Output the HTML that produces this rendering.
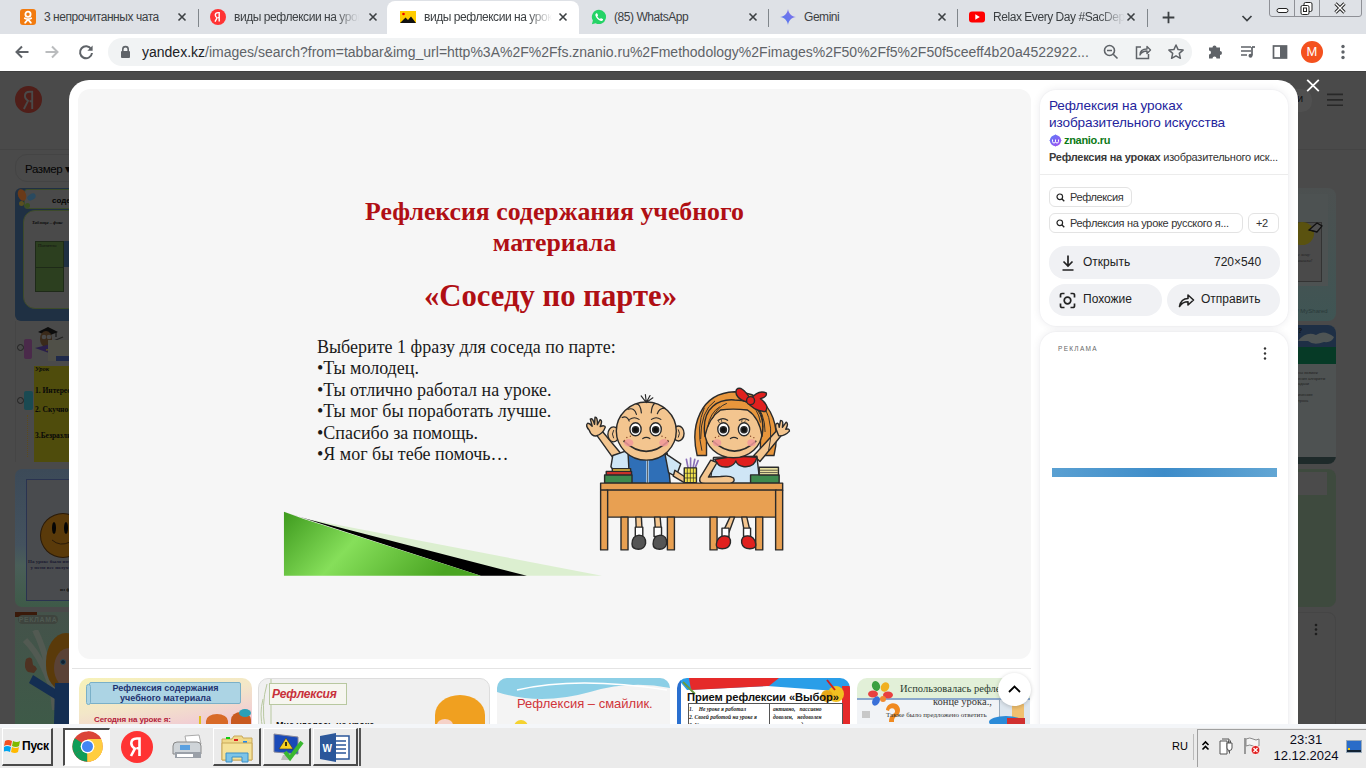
<!DOCTYPE html>
<html><head><meta charset="utf-8">
<style>
*{box-sizing:border-box;margin:0;padding:0}
html,body{width:1366px;height:768px;overflow:hidden;background:#fff;font-family:"Liberation Sans",sans-serif;position:relative}
.abs{position:absolute}
#tabs{left:0;top:0;width:1366px;height:34px;background:#dee1e6}
.tab{position:absolute;top:0;height:34px;font-size:12px;color:#3c4043}
.tab .t{position:absolute;top:10px;white-space:nowrap;overflow:hidden;letter-spacing:-0.45px}
.tab .x{position:absolute;top:9px;width:16px;height:16px}
.sep{position:absolute;top:9px;width:1px;height:18px;background:#80868b}
#toolbar{left:0;top:34px;width:1366px;height:36px;background:#fff}
#page{left:0;top:70px;width:1366px;height:654px;background:#4d4d4d;overflow:hidden}
#strip{left:0;top:724px;width:1366px;height:4px;background:#f4f6f9}
#taskbar{left:0;top:728px;width:1366px;height:40px;background:#ebebeb}
.tab.active{background:#fff;border-radius:8px 8px 0 0;top:1px;height:33px}
.tab.active .t{top:9px}.tab.active .x{top:8px}.tab.active svg.abs{top:8px!important}
.fade{-webkit-mask-image:linear-gradient(to right,#000 80%,transparent)}
.card{background:#fff;border-radius:16px;box-shadow:0 0 9px rgba(10,20,60,.09),0 0 2px rgba(10,20,60,.05)}
.chip{height:20px;border:1px solid #e3e3e3;border-radius:6px;font-size:11px;color:#333;letter-spacing:-0.4px}
.chip span{white-space:nowrap}
.btn{background:#f0f1f4;border-radius:16px;font-size:12px;color:#222}
.btn span{white-space:nowrap}
.th{height:60px;border-radius:10px;overflow:hidden}
.tb{position:absolute;top:728px;height:38px;border-top:1px solid #fff;border-left:1px solid #fff;border-right:2px solid #4a4a4a;border-bottom:2px solid #4a4a4a;background:#ebebeb}
.tb.pressed{border-top:2px solid #4a4a4a;border-left:2px solid #4a4a4a;border-right:1px solid #fff;border-bottom:1px solid #fff;background:#fff}
</style></head><body>
<div id="tabs" class="abs">
 <div class="tab" style="left:0;width:198px">
  <svg class="abs" style="left:20px;top:9px" width="16" height="16" viewBox="0 0 16 16"><rect width="16" height="16" rx="3" fill="#f27b0f"/><circle cx="8" cy="5.3" r="2.6" fill="none" stroke="#fff" stroke-width="1.8"/><path d="M4.8 9.2q3.2 2 6.4 0M8 10.5l-2.8 3.2M8 10.5l2.8 3.2" fill="none" stroke="#fff" stroke-width="1.8" stroke-linecap="round"/></svg>
  <div class="t" style="left:44px;width:130px">3 непрочитанных чата</div>
  <svg class="x" style="left:174px" viewBox="0 0 16 16"><path d="M4.5 4.5l7 7M11.5 4.5l-7 7" stroke="#3c4043" stroke-width="1.6"/></svg>
 </div>
 <div class="sep" style="left:198px"></div>
 <div class="tab" style="left:198px;width:190px">
  <svg class="abs" style="left:210px;top:9px;left:12px" width="16" height="16" viewBox="0 0 16 16"><circle cx="8" cy="8" r="8" fill="#f33"/><path d="M9.2 12.6V3.6H8.1C6.3 3.6 5.3 4.6 5.3 6.1c0 1.3.6 2 1.8 2.7L5 12.6M9.2 8.6H8" fill="none" stroke="#fff" stroke-width="1.4"/></svg>
  <div class="t fade" style="left:36px;width:125px">виды рефлексии на уроке</div>
  <svg class="x" style="left:167px" viewBox="0 0 16 16"><path d="M4.5 4.5l7 7M11.5 4.5l-7 7" stroke="#3c4043" stroke-width="1.6"/></svg>
 </div>
 <div class="tab active" style="left:387px;width:192px">
  <svg class="abs" style="left:13px;top:9px" width="16" height="16" viewBox="0 0 16 16"><rect x="0" y="2" width="16" height="12" fill="#ffcc00"/><circle cx="3.5" cy="5" r="1.3" fill="#e00"/><path d="M0 14L5.5 8.5 8 11l3-3.5L16 14z" fill="#111"/></svg>
  <div class="t fade" style="left:37px;width:128px">виды рефлексии на уроке</div>
  <svg class="x" style="left:168px" viewBox="0 0 16 16"><path d="M4.5 4.5l7 7M11.5 4.5l-7 7" stroke="#3c4043" stroke-width="1.6"/></svg>
 </div>
 <div class="tab" style="left:579px;width:190px">
  <svg class="abs" style="left:12px;top:9px" width="16" height="16" viewBox="0 0 16 16"><path d="M8 .8A7.1 7.1 0 0 0 1.9 11.6L.9 15.2l3.7-1A7.1 7.1 0 1 0 8 .8z" fill="#25d366"/><path d="M5.3 4.3c.3-.2.7-.2.9.1l.8 1.7c.1.3 0 .5-.2.7l-.5.6c.6 1.2 1.5 2 2.6 2.6l.6-.6c.2-.2.5-.2.7-.1l1.6.8c.3.2.3.5.2.8-.4.9-1.2 1.3-2 1.1C7.6 11.4 5 8.9 4.4 6.5c-.2-.9.2-1.7.9-2.2z" fill="#fff"/></svg>
  <div class="t" style="left:35px;width:130px">(85) WhatsApp</div>
  <svg class="x" style="left:166px" viewBox="0 0 16 16"><path d="M4.5 4.5l7 7M11.5 4.5l-7 7" stroke="#3c4043" stroke-width="1.6"/></svg>
 </div>
 <div class="sep" style="left:768px"></div>
 <div class="tab" style="left:769px;width:188px">
  <svg class="abs" style="left:11px;top:9px" width="16" height="16" viewBox="0 0 16 16"><defs><linearGradient id="gm" x1="0" y1="1" x2="1" y2="0"><stop offset="0" stop-color="#4a7cf0"/><stop offset="1" stop-color="#8a6ee8"/></linearGradient></defs><path d="M8 0C8.4 4.3 11.7 7.6 16 8 11.7 8.4 8.4 11.7 8 16 7.6 11.7 4.3 8.4 0 8 4.3 7.6 7.6 4.3 8 0z" fill="url(#gm)"/></svg>
  <div class="t" style="left:35px;width:130px">Gemini</div>
  <svg class="x" style="left:165px" viewBox="0 0 16 16"><path d="M4.5 4.5l7 7M11.5 4.5l-7 7" stroke="#3c4043" stroke-width="1.6"/></svg>
 </div>
 <div class="sep" style="left:957px"></div>
 <div class="tab" style="left:958px;width:189px">
  <svg class="abs" style="left:11px;top:9px" width="16" height="16" viewBox="0 0 16 16"><rect x="0" y="2.5" width="16" height="11" rx="3" fill="#f00"/><path d="M6.3 5.3v5.4L10.8 8z" fill="#fff"/></svg>
  <div class="t fade" style="left:35px;width:132px">Relax Every Day #SacDep</div>
  <svg class="x" style="left:165px" viewBox="0 0 16 16"><path d="M4.5 4.5l7 7M11.5 4.5l-7 7" stroke="#3c4043" stroke-width="1.6"/></svg>
 </div>
 <div class="sep" style="left:1147px"></div>
 <svg class="abs" style="left:1160px;top:9px" width="17" height="17" viewBox="0 0 16 16"><path d="M8 2.5v11M2.5 8h11" stroke="#3c4043" stroke-width="1.7"/></svg>
 <svg class="abs" style="left:1239px;top:10px" width="16" height="16" viewBox="0 0 16 16"><path d="M3.5 6l4.5 4.5L12.5 6" fill="none" stroke="#3c4043" stroke-width="1.7"/></svg>
 <div class="abs" style="left:1269px;top:-3px;width:93px;height:20px;border:1px solid #8e9096;border-radius:3px;background:#dee1e6"></div>
 <div class="abs" style="left:1294px;top:0;width:1px;height:16px;background:#8e9096"></div>
 <div class="abs" style="left:1319px;top:0;width:1px;height:16px;background:#8e9096"></div>
 <svg class="abs" style="left:1276px;top:3px" width="14" height="12" viewBox="0 0 14 12"><rect x="1" y="5.5" width="11" height="4" rx="2" fill="#fff" stroke="#222" stroke-width="1"/></svg>
 <svg class="abs" style="left:1299px;top:1px" width="16" height="15" viewBox="0 0 16 15"><rect x="5" y="1.5" width="8" height="9" rx="1.5" fill="#fff" stroke="#222"/><rect x="2" y="4.5" width="8" height="9" rx="1.5" fill="#fff" stroke="#222"/><rect x="4.5" y="7" width="3" height="3.5" fill="none" stroke="#222"/></svg>
 <svg class="abs" style="left:1333px;top:2px" width="14" height="13" viewBox="0 0 14 13"><path d="M2.5 1.5l9 9M11.5 1.5l-9 9" stroke="#222" stroke-width="3.2"/><path d="M2.5 1.5l9 9M11.5 1.5l-9 9" stroke="#fff" stroke-width="1.4"/></svg>
</div>
<div id="toolbar" class="abs">
 <svg class="abs" style="left:12px;top:8px" width="20" height="20" viewBox="0 0 20 20"><path d="M16.5 10H4.5M10 4.5L4.5 10 10 15.5" fill="none" stroke="#5f6368" stroke-width="2"/></svg>
 <svg class="abs" style="left:42px;top:8px" width="20" height="20" viewBox="0 0 20 20"><path d="M3.5 10h12M10 4.5l5.5 5.5L10 15.5" fill="none" stroke="#babcbe" stroke-width="2"/></svg>
 <svg class="abs" style="left:76px;top:8px" width="20" height="20" viewBox="0 0 20 20"><path d="M15.2 7.2A6 6 0 1 0 16 11" fill="none" stroke="#5f6368" stroke-width="2"/><path d="M16.6 3.6v5.2h-5.2z" fill="#5f6368"/></svg>
 <div class="abs" style="left:108px;top:4px;width:1084px;height:28px;border-radius:14px;background:#f1f3f4"></div>
 <svg class="abs" style="left:119px;top:11px" width="13" height="14" viewBox="0 0 13 14"><path d="M3.8 6V4.3a2.7 2.7 0 0 1 5.4 0V6" fill="none" stroke="#5f6368" stroke-width="1.6"/><rect x="2" y="6" width="9" height="7" rx="1" fill="#5f6368"/></svg>
 <div class="abs" style="left:142px;top:10px;font-size:14px;color:#5f6368;white-space:nowrap"><span style="color:#202124">yandex.kz</span>/images/search?from=tabbar&amp;img_url=http%3A%2F%2Ffs.znanio.ru%2Fmethodology%2Fimages%2F50%2Ff5%2F50f5ceeff4b20a4522922...</div>
 <svg class="abs" style="left:1102px;top:9px" width="18" height="18" viewBox="0 0 18 18"><circle cx="7.5" cy="7.5" r="5" fill="none" stroke="#5f6368" stroke-width="1.6"/><path d="M11.2 11.2L15.5 15.5M5 7.5h5" stroke="#5f6368" stroke-width="1.6"/></svg>
 <svg class="abs" style="left:1134px;top:9px" width="18" height="18" viewBox="0 0 18 18"><path d="M7 4H2.5v11.5h12V11" fill="none" stroke="#5f6368" stroke-width="1.5"/><path d="M6 12c0-4 3-6 7-6V3.5l3.5 3.5L13 10.5V8c-3 0-5.5 1-7 4z" fill="none" stroke="#5f6368" stroke-width="1.4" stroke-linejoin="round"/></svg>
 <svg class="abs" style="left:1167px;top:9px" width="18" height="18" viewBox="0 0 18 18"><path d="M9 2l2.1 4.6 5 .5-3.8 3.3 1.1 4.9L9 12.8l-4.4 2.5 1.1-4.9L1.9 7.1l5-.5z" fill="none" stroke="#5f6368" stroke-width="1.5" stroke-linejoin="round"/></svg>
 <svg class="abs" style="left:1207px;top:9px" width="18" height="18" viewBox="0 0 18 18"><path d="M2 6h3.5a2 2 0 1 1 4 0H13v3.5a2 2 0 1 1 0 4V17H9.5a2 2 0 1 0-4 0H2v-4a2 2 0 1 0 0-4z" fill="#5f6368" transform="translate(0,-1.5)"/></svg>
 <svg class="abs" style="left:1239px;top:9px" width="18" height="18" viewBox="0 0 18 18"><path d="M2 4h10M2 8h10M2 12h6" stroke="#5f6368" stroke-width="1.7"/><path d="M13 4v8.5" stroke="#5f6368" stroke-width="1.7"/><circle cx="11.5" cy="12.8" r="2" fill="#5f6368"/><path d="M13 4h3" stroke="#5f6368" stroke-width="1.7"/></svg>
 <svg class="abs" style="left:1271px;top:9px" width="18" height="18" viewBox="0 0 18 18"><rect x="2.5" y="3" width="13" height="12" fill="none" stroke="#5f6368" stroke-width="1.7"/><rect x="9" y="3" width="6.5" height="12" fill="#5f6368"/></svg>
 <div class="abs" style="left:1301px;top:7px;width:22px;height:22px;border-radius:50%;background:#f4511e;color:#fff;font-size:13px;text-align:center;line-height:22px">M</div>
 <svg class="abs" style="left:1335px;top:9px" width="16" height="18" viewBox="0 0 16 18"><circle cx="8" cy="3.5" r="1.7" fill="#5f6368"/><circle cx="8" cy="9" r="1.7" fill="#5f6368"/><circle cx="8" cy="14.5" r="1.7" fill="#5f6368"/></svg>
</div>
<div id="page" class="abs">
 <!-- background yandex page -->
<div id="bg" class="abs" style="left:0;top:0;width:1366px;height:654px;background:#4a4a4a">
  <div class="abs" style="left:15px;top:16px;width:27px;height:27px;border-radius:50%;background:#501e19"></div>
  <svg class="abs" style="left:15px;top:16px" width="27" height="27" viewBox="0 0 27 27"><path d="M17.2 23V5.8h-2.4c-3.2 0-4.9 1.7-4.9 4.3 0 2.2 1 3.4 3.1 4.7L8.9 23M17.2 15.3h-2.6" fill="none" stroke="#4a4a4a" stroke-width="1.9"/></svg>
  <div class="abs" style="left:0;top:79px;width:1366px;height:1px;background:#444"></div>
  <div class="abs" style="left:15px;top:84px;width:90px;height:28px;border:1px solid #444;border-radius:12px"></div>
  <div class="abs" style="left:25px;top:92px;font-size:11.5px;letter-spacing:-0.4px;color:#050505">Размер ▾</div>
  <div class="abs" style="left:1200px;top:19px;width:112px;height:23px;border-radius:10px;background:#505050"></div>
  <div class="abs" style="left:1297px;top:22px;font-size:11px;color:#111">и</div>
  <svg class="abs" style="left:1327px;top:22px" width="16" height="14"><path d="M0 2.4h16M0 7.9h16M0 13.2h16" stroke="#282828" stroke-width="1.6"/></svg>
  <!-- left thumb 1 -->
  <div class="abs" style="left:15px;top:118px;width:180px;height:133px;border-radius:6px;background:#1f3043"></div>
  <div class="abs" style="left:24px;top:119px;width:170px;height:20px;background:#4a4a4a;border:1px solid #3c4a2a;border-radius:3px"></div>
  <div class="abs" style="left:18px;top:119px;width:8px;height:12px;border-radius:50%;background:#6a3a18;transform:rotate(-20deg)"></div>
  <div class="abs" style="left:27px;top:124px;width:9px;height:6px;border-radius:50%;background:#2a4a60;transform:rotate(-30deg)"></div>
  <div class="abs" style="left:19px;top:131px;width:5px;height:5px;border-radius:50%;background:#5a5020"></div>
  <div class="abs" style="left:25px;top:133px;width:5px;height:5px;border-radius:50%;background:#3a5020"></div>
  <div class="abs" style="left:52px;top:126px;font-size:8px;font-weight:bold;color:#060606">соде</div>
  <div class="abs" style="left:23px;top:140px;width:170px;height:99px;background:#4a4a4a;border:1px solid #3c4a2a;border-radius:12px"></div>
  <div class="abs" style="left:32px;top:150px;font-size:4.5px;font-style:italic;font-weight:bold;color:#080808;font-family:'Liberation Serif'">Таблица – фикс</div>
  <div class="abs" style="left:35px;top:171px;width:29px;height:51px;background:#2c3f1f;border:1px solid #1e2a18"></div>
  <div class="abs" style="left:35px;top:197px;width:29px;height:1px;background:#1e2a18"></div>
  <div class="abs" style="left:64px;top:171px;width:6px;height:26px;background:#1f3043"></div>
  <div class="abs" style="left:38px;top:173px;font-size:5px;color:#111;font-family:'Liberation Serif'">Понятно</div>
  <!-- left thumb 2 -->
  <div class="abs" style="left:15px;top:251px;width:180px;height:141px;background:#4a4a4a;border-left:1px solid #454545"></div>
  <svg class="abs" style="left:34px;top:254px" width="30" height="30" viewBox="0 0 30 30"><path d="M4 8l10-5 10 5-10 4z" fill="#0c0c0c"/><path d="M22 8v5" stroke="#0c0c0c"/><ellipse cx="12" cy="15" rx="6" ry="8" fill="#3a2a1a"/><circle cx="10" cy="13" r="2.3" fill="#4a4a4a"/><circle cx="15" cy="13" r="2.3" fill="#4a4a4a"/><path d="M17 18l12-5" stroke="#222" stroke-width="1.2"/><path d="M1 24l16-4 12 4-14 5z" fill="#2a1f4a"/><path d="M12 26l15-2" stroke="#5a5020" stroke-width="1.4"/></svg>
  <div class="abs" style="left:24px;top:269px;width:8px;height:20px;border-radius:2px;background:#4a2a4a"></div>
  <div class="abs" style="left:17px;top:274px;width:7px;height:7px;border-radius:50%;border:1px solid #222"></div>
  <div class="abs" style="left:48px;top:270px;width:30px;height:21px;background:#505048"></div>
  <div class="abs" style="left:56px;top:286px;width:20px;height:5px;background:#1f2a4a"></div>
  <div class="abs" style="left:34px;top:296px;width:160px;height:96px;background:#4f4c0c"></div>
  <div class="abs" style="left:24px;top:321px;width:9px;height:19px;border-radius:2px;background:#1a4a52"></div>
  <div class="abs" style="left:17px;top:327px;width:7px;height:7px;border-radius:50%;border:1px solid #222"></div>
  <div class="abs" style="left:27px;top:345px;width:1px;height:42px;border-left:1px dotted #5a4a20"></div>
  <div class="abs" style="left:35px;top:295px;font-size:6.5px;font-style:italic;font-weight:bold;font-family:'Liberation Serif';color:#0a0a0a">Урок</div>
  <div class="abs" style="left:35px;top:311px;font-size:7.5px;font-weight:bold;font-family:'Liberation Serif';line-height:19px;color:#080808">1. Интерес<br>2. Скучно</div>
  <div class="abs" style="left:35px;top:361px;font-size:7.5px;font-weight:bold;font-family:'Liberation Serif';color:#080808">3.Безразли</div>
  <!-- left thumb 3 -->
  <div class="abs" style="left:15px;top:399px;width:180px;height:138px;border-radius:7px;background:linear-gradient(#3c4a58 0%,#44525e 55%,#4a5e58 70%,#3e5a48 100%)"></div>
  <div class="abs" style="left:26px;top:409px;width:168px;height:122px;background:#494b4e;border:1px solid #2a3350"></div>
  <div class="abs" style="left:40px;top:443px;width:46px;height:45px;border-radius:50%;background:#5a3a0a;border:1px solid #2a1a08"></div>
  <div class="abs" style="left:52px;top:452px;width:4px;height:12px;border-radius:50%;background:#050505"></div>
  <div class="abs" style="left:64px;top:452px;width:4px;height:12px;border-radius:50%;background:#050505"></div>
  <svg class="abs" style="left:50px;top:468px" width="20" height="10"><path d="M2 2q8 7 18 2" fill="none" stroke="#2a1a08" stroke-width="1"/></svg>
  <div class="abs" style="left:28px;top:489px;font-size:5px;font-weight:bold;font-family:'Liberation Serif';color:#1a1a30;white-space:nowrap;line-height:6px">На уроке было инте<br>&nbsp;&nbsp;у меня все получ</div>
  <div class="abs" style="left:60px;top:517px;font-size:5px;font-weight:bold;font-family:'Liberation Serif';color:#111">из ф</div>
  <!-- left thumb 4 -->
  <div class="abs" style="left:15px;top:542px;width:180px;height:112px;background:linear-gradient(#44524a,#3e5a48)"></div>
  <svg class="abs" style="left:15px;top:560px" width="55" height="94" viewBox="0 0 55 94"><path d="M10 10q20 20 30 60M20 0q15 30 20 80" stroke="#525a52" stroke-width="6" fill="none"/></svg>
  <div class="abs" style="left:15px;top:542px;width:22px;height:5px;background:#3a1a0a"></div>
  <div class="abs" style="left:18px;top:545px;width:40px;height:9px;border-radius:5px;background:#3e443e;color:#4e5a52;font-size:7px;line-height:9px;text-align:center;letter-spacing:.6px;font-weight:bold">РЕКЛАМА</div>
  <div class="abs" style="left:46px;top:563px;width:40px;height:58px;border-radius:50% 50% 45% 45%;background:#5a3a0a"></div>
  <div class="abs" style="left:54px;top:578px;width:30px;height:40px;border-radius:50%;background:#5a4236"></div>
  <div class="abs" style="left:60px;top:589px;width:6px;height:6px;border-radius:50%;background:#102030;border:1px solid #2a4a5a"></div>
  <svg class="abs" style="left:20px;top:585px" width="50" height="69" viewBox="0 0 50 69"><path d="M6 4q4-3 6 0l1 6q3 1 4 4l-3 4-6-1q-5-4-2-13z" fill="#4e3222"/><path d="M13 20l22 14 0 10-26-16z" fill="#142e52"/><path d="M35 28h15v41H34z" fill="#142e52"/></svg>
  <!-- right column -->
  <div class="abs" style="left:1238px;top:118px;width:98px;height:133px;border-radius:8px;background:linear-gradient(#4c5050,#3f5554)"></div>
  <div class="abs" style="left:1250px;top:124px;width:78px;height:92px;background:#4d5252"></div>
  <div class="abs" style="left:1250px;top:152px;width:72px;height:60px;background:#4a4a4a;border:1px solid #333"></div>
  <div class="abs" style="left:1290px;top:152px;width:24px;height:23px;border-radius:50%;background:#5a520f"></div>
  <svg class="abs" style="left:1306px;top:151px" width="18" height="14"><path d="M3 9l8-7 5 3-5 6z" fill="#505050" stroke="#111" stroke-width="1.3"/><path d="M3 9l8 2" stroke="#111"/></svg>
  <div class="abs" style="left:1295px;top:182px;font-size:5px;font-style:italic;color:#222;font-family:'Liberation Serif';line-height:6px">ас хочу<br>лишили!</div>
  <div class="abs" style="left:1297px;top:238px;font-size:6px;color:#2a3a3a">/ MyShared</div>
  <div class="abs" style="left:1238px;top:255px;width:98px;height:139px;border-radius:8px;background:#4e5252;overflow:hidden"><div style="height:22px;background:#1e2f45"></div><div style="height:17px;background:#063a26"></div><div style="height:93px;background:#4e5252"></div><div style="height:7px;background:#1e2a2a"></div></div>
  <svg class="abs" style="left:1298px;top:259px" width="38" height="20"><path d="M0 12q8-10 18-6q8-6 18 2q-2 6-10 5q-10 4-16-1z" fill="#4e5454"/></svg>
  <div class="abs" style="left:1298px;top:257px;font-size:7px;font-weight:bold;color:#111">?</div>
  <div class="abs" style="left:1298px;top:300px;font-size:4px;color:#222;line-height:5.5px;white-space:nowrap">ны возмож<br>ения алгоритм<br>адачи<br><br>ические<br>трока</div>
  <div class="abs" style="left:1238px;top:399px;width:98px;height:138px;border-radius:8px;background:#3e4a3e"></div>
  <div class="abs" style="left:1240px;top:402px;width:87px;height:23px;background:#4b4b4b"></div>
  <div class="abs" style="left:1238px;top:542px;width:98px;height:140px;border-radius:8px;border:1px solid #454545;background:#4a4a4a"></div>
  <svg class="abs" style="left:1313px;top:553px" width="6" height="13"><circle cx="3" cy="2" r="1.3" fill="#1e1e1e"/><circle cx="3" cy="6.5" r="1.3" fill="#1e1e1e"/><circle cx="3" cy="11" r="1.3" fill="#1e1e1e"/></svg>
 </div>
 <!-- modal close -->
 <svg class="abs" style="left:1306px;top:9px" width="14" height="13" viewBox="0 0 14 13"><path d="M1.2 0.8l11.6 11.4M12.8 0.8L1.2 12.2" stroke="#fff" stroke-width="1.8"/></svg>
 <!-- modal -->
 <div id="modal" class="abs" style="left:69px;top:10px;width:1229px;height:680px;background:#fff;border-radius:20px 20px 0 0;overflow:hidden">
  <div class="abs" style="left:9px;top:9px;width:953px;height:570px;background:#f6f6f6;border-radius:12px"></div>
 <div id="imgbox" class="abs" style="left:10px;top:10px;width:951px;height:568px;overflow:hidden">
  <div class="abs slide" style="left:0;top:0;width:951px;height:568px;font-family:'Liberation Serif',serif">
   <div class="abs" style="left:0;width:951px;top:106px;text-align:center;font-weight:bold;color:#b00f14;font-size:25.8px;line-height:31px">Рефлексия содержания учебного<br>материала</div>
   <div class="abs" style="left:-4px;width:951px;top:188.5px;text-align:center;font-weight:bold;color:#b00f14;font-size:30.7px;line-height:34px">«Соседу по парте»</div>
   <div class="abs" style="left:238px;top:247px;color:#1a1a1a;font-size:18px;line-height:21.4px;white-space:nowrap">Выберите 1 фразу для соседа по парте:<br>•Ты молодец.<br>•Ты отлично работал на уроке.<br>•Ты мог бы поработать лучше.<br>•Спасибо за помощь.<br>•Я мог бы тебе помочь…</div>
   <svg class="abs" style="left:501px;top:290px" width="220" height="180" viewBox="0 0 939 768">
    <g stroke="#2a2a2a" stroke-width="6" stroke-linejoin="round" stroke-linecap="round">
     <!-- boy raised arm -->
     <path d="M150 345 L62 222 L84 206 L178 318 Z" fill="#f3c58f"/>
     <path d="M40 215 q-18 -20 -8 -30 q8 -2 20 12 l-8 -30 q10 -8 18 22 l2 -30 q12 -2 10 32 l12 -22 q12 4 0 30 q20 -8 22 2 q-10 30 -40 38 q-20 0 -28 -24z" fill="#f3c58f"/>
     <!-- boy body -->
     <path d="M140 322 L210 298 L222 440 L160 440 Q145 420 150 395 L132 370 Z" fill="#cfe6f6"/>
     <path d="M205 312 Q290 340 372 312 L385 440 L212 440 Z" fill="#2f6fb7"/>
     <path d="M288 335 V440" stroke="#cfe6f6" stroke-width="10"/>
     <path d="M288 335 V440" stroke-width="3"/>
     <path d="M362 312 L430 358 L410 412 L378 395 Z" fill="#cfe6f6"/>
     <path d="M405 385 L455 418 L445 438 L398 410 Z" fill="#f3c58f"/>
     <!-- boy head -->
     <ellipse cx="143" cy="232" rx="24" ry="32" fill="#f3c58f"/>
     <path d="M143 215 q-10 15 0 32" fill="none" stroke-width="4"/>
     <ellipse cx="420" cy="228" rx="24" ry="32" fill="#f3c58f"/>
     <path d="M420 212 q10 15 0 32" fill="none" stroke-width="4"/>
     <ellipse cx="283" cy="218" rx="128" ry="124" fill="#f3c58f"/>
     <path d="M283 96 l-22 -28 M283 96 l-4 -34 M283 96 l16 -30 M283 96 l28 -20 M240 102 q18 0 22 38 M318 100 q-12 10 -14 40 M205 125 q28 -10 36 22 M362 120 q-25 0 -32 24 M180 160 q20 -10 30 15" fill="none" stroke-width="5"/>
     <path d="M212 168 q20 -14 40 0 M305 168 q20 -14 40 0" fill="none" stroke-width="5"/>
     <ellipse cx="237" cy="210" rx="24" ry="28" fill="#fff"/><ellipse cx="323" cy="210" rx="24" ry="28" fill="#fff"/>
     <circle cx="237" cy="212" r="13" fill="#111"/><circle cx="323" cy="212" r="13" fill="#111"/>
     <path d="M268 250 q15 -10 30 0" fill="none" stroke-width="5"/>
     <path d="M188 262 q95 85 188 0" fill="none" stroke-width="7"/>
     <!-- girl hair back -->
     <path d="M500 322 C470 200 510 55 660 50 C810 50 860 190 828 322 L770 322 L770 250 L540 250 L540 322 Z" fill="#e8963c"/>
     <!-- girl raised arm -->
     <path d="M742 322 L845 210 L866 228 L768 348 Z" fill="#f3c58f"/>
     <path d="M838 212 q-8 -25 4 -28 q8 2 8 18 l6 -30 q14 0 8 30 l16 -22 q12 6 -2 30 q16 -4 16 8 q-20 22 -46 20z" fill="#f3c58f"/>
     <!-- girl body -->
     <path d="M570 330 L755 325 L768 440 L555 440 Z" fill="#cfe6f6"/>
     <path d="M575 338 q15 40 60 32 q25 -8 30 -25 q5 20 35 25 q45 4 55 -40 q-90 -10 -180 8z" fill="#e0201e"/>
     <path d="M558 342 L512 418 Q505 442 535 442 L640 442 Q665 436 655 418 Q640 406 600 412 L548 414 L585 352 Z" fill="#f3c58f"/>
     <!-- girl head -->
     <ellipse cx="655" cy="222" rx="122" ry="110" fill="#f3c58f"/>
     <path d="M533 240 C515 110 600 80 660 85 C745 85 795 125 777 240 Q765 160 715 128 Q650 120 600 128 Q550 160 533 240 Z" fill="#e8963c"/>
     <path d="M545 200 q10 -60 50 -85 M565 165 q20 -50 60 -65 M720 100 q40 20 50 80 M740 110 q40 30 40 90 M520 300 q-25 -100 10 -180 M805 300 q25 -100 -15 -180 M515 250 q0 -120 60 -160 M790 220 q0 -80 -50 -130" fill="none" stroke-width="4"/>
     <path d="M590 172 q20 -14 40 0 M680 172 q20 -14 40 0" fill="none" stroke-width="5"/>
     <path d="M595 182 l-6 -8 M605 178 l-2 -9 M690 178 l2 -9 M700 182 l6 -8" stroke-width="3"/>
     <ellipse cx="612" cy="210" rx="24" ry="28" fill="#fff"/><ellipse cx="700" cy="210" rx="24" ry="28" fill="#fff"/>
     <circle cx="612" cy="212" r="13" fill="#111"/><circle cx="700" cy="212" r="13" fill="#111"/>
     <path d="M642 250 q15 -10 30 0" fill="none" stroke-width="5"/>
     <path d="M568 262 q92 82 182 0" fill="none" stroke-width="7"/>
     <path d="M728 82 Q690 20 668 40 Q655 75 715 95 Q740 130 790 135 Q812 110 770 80 Q800 70 795 55 Q760 40 728 82 Z" fill="#e0201e"/>
     <circle cx="728" cy="88" r="17" fill="#e0201e"/>
     <!-- books left -->
     <rect x="105" y="405" width="117" height="35" fill="#3e8a4e"/>
     <rect x="112" y="390" width="108" height="15" fill="#c8302a"/>
     <rect x="138" y="378" width="78" height="12" fill="#e8c040"/>
     <!-- pencil cup -->
     <path d="M462 378 l-8 -40 M472 378 l0 -45 M482 378 l8 -40 M490 378 l14 -34" stroke="#8a6fb8" stroke-width="7"/>
     <rect x="445" y="375" width="52" height="63" fill="#f2e34a"/>
     <path d="M458 378 v58 M471 378 v58 M484 378 v58 M445 398 h52 M445 418 h52" stroke-width="3"/>
     <!-- books right -->
     <rect x="728" y="405" width="122" height="35" fill="#3e8a4e"/>
     <rect x="765" y="372" width="82" height="33" fill="#e8e0a0"/>
     <path d="M770 385 h72 M770 395 h72" stroke-width="3"/>
     <!-- desk -->
     <rect x="88" y="440" width="777" height="30" fill="#e8a052"/>
     <rect x="115" y="470" width="723" height="115" fill="#e8a052"/>
     <rect x="88" y="470" width="30" height="255" fill="#e8a052"/>
     <rect x="835" y="470" width="30" height="255" fill="#e8a052"/>
     <rect x="175" y="585" width="30" height="140" fill="#e8a052"/>
     <rect x="373" y="585" width="30" height="140" fill="#e8a052"/>
     <rect x="555" y="585" width="30" height="140" fill="#e8a052"/>
     <rect x="750" y="585" width="30" height="140" fill="#e8a052"/>
     <!-- legs -->
     <path d="M238 585 L240 640 L265 640 L262 585 Z M318 585 L322 640 L347 640 L342 585 Z" fill="#f3c58f"/>
     <path d="M640 585 L612 645 L636 650 L660 585 Z M690 585 L702 650 L726 645 L712 585 Z" fill="#f3c58f"/>
     <rect x="236" y="628" width="32" height="40" fill="#fff"/>
     <rect x="316" y="628" width="32" height="40" fill="#fff"/>
     <path d="M222 700 q0 -35 30 -38 q30 2 28 35 q-5 25 -30 25 q-28 0 -28 -22z" fill="#555"/>
     <path d="M312 700 q0 -35 30 -38 q30 2 28 35 q-5 25 -30 25 q-28 0 -28 -22z" fill="#555"/>
     <rect x="606" y="632" width="30" height="36" fill="#fff"/>
     <rect x="698" y="632" width="30" height="36" fill="#fff"/>
     <path d="M582 700 q5 -35 35 -35 q28 0 25 30 q-5 25 -35 25 q-28 0 -25 -20z" fill="#e0201e"/>
     <path d="M690 695 q-3 -30 25 -30 q30 0 35 35 q3 20 -25 20 q-30 0 -35 -25z" fill="#e0201e"/>
    </g>
    <g fill="#f29a9a" opacity=".85"><ellipse cx="208" cy="268" rx="20" ry="16"/><ellipse cx="358" cy="268" rx="20" ry="16"/><ellipse cx="585" cy="268" rx="18" ry="15"/><ellipse cx="732" cy="268" rx="18" ry="15"/></g>
    <g fill="#8a4a2a"><circle cx="200" cy="245" r="3"/><circle cx="215" cy="240" r="3"/><circle cx="190" cy="258" r="3"/><circle cx="350" cy="240" r="3"/><circle cx="365" cy="246" r="3"/><circle cx="375" cy="258" r="3"/><circle cx="578" cy="245" r="3"/><circle cx="592" cy="240" r="3"/><circle cx="728" cy="240" r="3"/><circle cx="742" cy="246" r="3"/></g>
   </svg>
   <svg class="abs" style="left:191px;top:410px" width="360" height="90" viewBox="0 0 1366 342">
    <defs><linearGradient id="gg" x1="0" y1="0" x2="1" y2="0.3"><stop offset="0" stop-color="#3e9a1e"/><stop offset=".45" stop-color="#86df5a"/><stop offset="1" stop-color="#4aa522"/></linearGradient></defs>
    <path d="M120 68 L1260 288 L900 288 Z" fill="#dcefd0"/>
    <path d="M52 45 Q100 62 150 75 L975 288 L800 288 Z" fill="#000"/>
    <path d="M52 45 Q120 72 200 95 L800 288 L52 288 Z" fill="url(#gg)"/>
   </svg>
  </div>
 </div>
  <div class="abs" style="left:3px;top:588px;width:959px;height:1px;background:#e4e4e4"></div>
  <div id="thumbs">
  <div class="abs th" style="left:10px;top:598px;width:173px;background:linear-gradient(170deg,#f7f2b8 0%,#f3e7c8 40%,#efb8dc 100%)">
   <div class="abs" style="left:10px;top:4px;width:152px;height:22px;background:#acd4e4;border:1px solid #7ab0c8;border-radius:2px"></div><div class="abs" style="left:7px;top:6px;width:5px;height:21px;background:#acd4e4;border:1px solid #7ab0c8;border-radius:3px"></div>
   <div class="abs" style="left:0;width:173px;top:5px;text-align:center;font-size:9px;line-height:10px;font-weight:bold;color:#1e3270">Рефлексия содержания<br>учебного материала</div>
   <div class="abs" style="left:15px;top:37px;font-size:8px;font-weight:bold;color:#b3203a;letter-spacing:-0.1px">Сегодня на уроке я:</div>
   <div class="abs" style="left:120px;top:38px;width:2px;height:8px;background:#e0c020"></div>
   <div class="abs" style="left:127px;top:36px;width:22px;height:14px;border-radius:50% 50% 0 0;background:#d86a28"></div>
   <div class="abs" style="left:152px;top:34px;width:20px;height:16px;border-radius:50% 50% 0 0;background:#c85a20"></div>
   <div class="abs" style="left:160px;top:31px;width:12px;height:8px;border-radius:50%;background:#2aa0b8"></div>
  </div>
  <div class="abs th" style="left:189px;top:598px;width:232px;background:#f0f0f0;border:1px solid #ddd">
   <svg class="abs" style="left:0;top:0" width="30" height="50"><path d="M12 0v50M8 5q-6 20 -2 45M4 20q-4 15 0 30" stroke="#b8c8a0" fill="none" stroke-width="1"/></svg>
   <div class="abs" style="left:10px;top:4px;width:78px;height:22px;background:#f6f6f0;border:1px solid #b8c8a0"></div>
   <div class="abs" style="left:13px;top:8px;font-size:12px;font-weight:bold;font-style:italic;color:#c8303a;letter-spacing:-0.2px">Рефлексия</div>
   <div class="abs" style="left:17px;top:41px;font-size:9px;font-weight:bold;color:#111">Мне удалось на уроке</div>
   <div class="abs" style="left:176px;top:16px;width:50px;height:40px;border-radius:50% 50% 0 0;background:#f0a020"></div>
   <div class="abs" style="left:178px;top:40px;width:16px;height:12px;border-radius:50%;background:#f6d2c8"></div>
  </div>
  <div class="abs th" style="left:428px;top:598px;width:173px;background:#f4f4f4">
   <svg class="abs" style="left:0;top:0" width="173" height="24" viewBox="0 0 173 24"><path d="M0 0h173v10q-40 -8 -80 4 q-50 14 -93 0z" fill="#8ccfe6"/><path d="M20 12q60 -14 150 0" stroke="#fff" stroke-width="1.5" fill="none"/></svg>
   <div class="abs" style="left:20px;top:18px;font-size:13px;color:#d0343a">Рефлексия – смайлик.</div>
   <div class="abs" style="left:17px;top:42px;width:14px;height:14px;border-radius:50%;background:#f5d230"></div>
  </div>
  <div class="abs th" style="left:608px;top:598px;width:173px;background:#fff">
   <svg class="abs" style="left:0;top:0" width="173" height="50" viewBox="0 0 173 50"><path d="M0 0h173v14L90 8 10 12z" fill="#2a9ee8"/><path d="M12 0h90l-10 8L14 12z" fill="#e52a2a"/><path d="M0 0h4v50H0z" fill="#2a70d0"/><path d="M165 8h8v42h-8z" fill="#e52a2a"/><circle cx="159" cy="16" r="8" fill="#f2c020"/><circle cx="150" cy="18" r="6" fill="#e8a818"/><path d="M150 2l8 10" stroke="#d02020" stroke-width="2"/><path d="M6 4l12 12" stroke="#6a9a40" stroke-width="2"/></svg>
   <div class="abs" style="left:10px;top:13px;font-size:11.2px;font-weight:bold;color:#111;white-space:nowrap;letter-spacing:-0.1px">Прием рефлексии «Выбор»</div>
   <div class="abs" style="left:11px;top:25px;width:155px;height:30px;border:1px solid #555;background:#fff"></div>
   <div class="abs" style="left:12px;top:27px;font-size:5.5px;font-style:italic;font-weight:bold;font-family:'Liberation Serif';line-height:8.2px;white-space:nowrap;color:#222">1.&nbsp;&nbsp;&nbsp; Не уроке я работал<br>2. Своей работой на уроке я<br>3. Урок показался мне</div>
   <div class="abs" style="left:92px;top:25px;width:1px;height:30px;background:#555"></div>
   <div class="abs" style="left:96px;top:27px;font-size:5.5px;font-style:italic;font-weight:bold;font-family:'Liberation Serif';line-height:8.2px;white-space:nowrap;color:#222">активно,&nbsp;&nbsp; пассивно<br>доволен,&nbsp;&nbsp; недоволен<br>коротким, длинным</div>
  </div>
  <div class="abs th" style="left:788px;top:598px;width:173px;background:linear-gradient(#e2f0d8 0,#e2f0d8 20px,#8aa8cc 20px,#8aa8cc 22px,#f1f3f6 22px)">
   <svg class="abs" style="left:11px;top:3px" width="26" height="26" viewBox="0 0 26 26"><ellipse cx="8" cy="5" rx="4" ry="5" fill="#3aa040" transform="rotate(-20 8 5)"/><ellipse cx="17" cy="6" rx="4" ry="5" fill="#f0b020" transform="rotate(30 17 6)"/><ellipse cx="5" cy="13" rx="5" ry="3.5" fill="#e84040"/><ellipse cx="20" cy="14" rx="5" ry="3.5" fill="#e84040"/><ellipse cx="8" cy="20" rx="3.5" ry="5" fill="#3a70d8" transform="rotate(30 8 20)"/><ellipse cx="15" cy="18" rx="3" ry="3" fill="#f08a30"/></svg>
   <div class="abs" style="left:5px;top:33px;width:8px;height:7px;background:#c8c8c8"></div>
   <div class="abs" style="left:43px;top:5px;font-size:10.5px;font-family:'Liberation Serif';color:#2a3a30;white-space:nowrap">Использовалась рефлексия в</div>
   <div class="abs" style="left:76px;top:18px;font-size:10.5px;font-family:'Liberation Serif';color:#333;white-space:nowrap">конце урока.,</div>
   <svg class="abs" style="left:26px;top:25px" width="20" height="26" viewBox="0 0 20 26"><path d="M3 7a7 7 0 1 1 11 6c-3 2-3 3-3 6h-5c0-4 1-6 4-8a3 3 0 1 0-4-3z" fill="#f08a20"/><circle cx="8.5" cy="24" r="2.5" fill="#f08a20"/></svg>
   <div class="abs" style="left:29px;top:33px;font-size:7px;font-family:'Liberation Serif';color:#333;white-space:nowrap">Также было предложено ответить</div>
   <div class="abs" style="left:142px;top:22px;width:31px;height:30px;background:#dde6ee;border-left:1px solid #9ab"></div>
   <div class="abs" style="left:155px;top:26px;width:12px;height:14px;background:#f0c070"></div>
   <div class="abs" style="left:132px;top:38px;width:34px;height:12px;border-radius:50%;background:#2a8ad8"></div>
   <div class="abs" style="left:150px;top:40px;width:18px;height:6px;background:#d03030"></div>
  </div>
 </div>
  <div class="abs" style="left:929px;top:593px;width:33px;height:33px;border-radius:50%;background:#fff;box-shadow:0 1px 4px rgba(0,0,0,.2)"></div>
  <svg class="abs" style="left:937px;top:601px" width="17" height="17" viewBox="0 0 17 17"><path d="M3 11l5.5-5.5L14 11" fill="none" stroke="#000" stroke-width="1.8"/></svg>
  <!-- right cards -->
  <div id="card1" class="abs card" style="left:971px;top:10px;width:248px;height:236px">
   <div class="abs" style="left:9px;top:7px;font-size:13.6px;line-height:17px;color:#24249c;white-space:nowrap;letter-spacing:-0.1px">Рефлексия на уроках<br>изобразительного искусства</div>
   <svg class="abs" style="left:9px;top:44px" width="13" height="13" viewBox="0 0 13 13"><defs><linearGradient id="zn" x1="0" y1="0" x2="1" y2="1"><stop offset="0" stop-color="#5b7cf7"/><stop offset="1" stop-color="#a64df0"/></linearGradient></defs><path d="M6.5 0.3 L12.7 6.5 L6.5 12.7 L0.3 6.5 Z" fill="url(#zn)" transform="rotate(0)"/><circle cx="6.5" cy="6.5" r="5.5" fill="url(#zn)"/><path d="M3.5 5.5v2a1.5 1.5 0 0 0 3 0v-2M6.5 7.5a1.5 1.5 0 0 0 3 0v-2" fill="none" stroke="#fff" stroke-width="1"/></svg>
   <div class="abs" style="left:24px;top:44px;font-size:11px;line-height:13px;font-weight:bold;color:#0b7a16;letter-spacing:-0.3px">znanio.ru</div>
   <div class="abs" style="left:9px;top:61px;font-size:11px;line-height:13px;color:#333;white-space:nowrap;letter-spacing:-0.25px"><b style="color:#3a3a3a">Рефлексия на уроках</b> изобразительного иск...</div>
   <div class="abs" style="left:0;top:84px;width:248px;height:1px;background:#ececec"></div>
   <div class="abs chip" style="left:9px;top:97px;width:83px"><svg class="abs" style="left:6px;top:5px" width="9" height="9" viewBox="0 0 9 9"><circle cx="3.8" cy="3.8" r="2.8" fill="none" stroke="#222" stroke-width="1.2"/><path d="M5.8 5.8L8.3 8.3" stroke="#222" stroke-width="1.3"/></svg><span class="abs" style="left:20px;top:3px">Рефлексия</span></div>
   <div class="abs chip" style="left:9px;top:123px;width:194px"><svg class="abs" style="left:6px;top:5px" width="9" height="9" viewBox="0 0 9 9"><circle cx="3.8" cy="3.8" r="2.8" fill="none" stroke="#222" stroke-width="1.2"/><path d="M5.8 5.8L8.3 8.3" stroke="#222" stroke-width="1.3"/></svg><span class="abs" style="left:20px;top:3px;letter-spacing:-0.3px">Рефлексия на уроке русского я...</span></div>
   <div class="abs chip" style="left:208px;top:123px;width:31px"><span class="abs" style="left:7px;top:3px">+2</span></div>
   <div class="abs btn" style="left:9px;top:156px;width:231px;height:33px">
    <svg class="abs" style="left:11px;top:8px" width="16" height="18" viewBox="0 0 16 18"><path d="M8 1.5v10M3.5 7.5L8 12l4.5-4.5M2.5 16h11" fill="none" stroke="#222" stroke-width="1.7"/></svg>
    <span class="abs" style="left:34px;top:9px">Открыть</span><span class="abs" style="left:165px;top:9px">720×540</span></div>
   <div class="abs btn" style="left:9px;top:194px;width:113px;height:32px">
    <svg class="abs" style="left:10px;top:8px" width="17" height="17" viewBox="0 0 17 17"><path d="M1.5 5.5V3a1.5 1.5 0 0 1 1.5-1.5h2.5M11.5 1.5H14A1.5 1.5 0 0 1 15.5 3v2.5M15.5 11.5V14a1.5 1.5 0 0 1-1.5 1.5h-2.5M5.5 15.5H3A1.5 1.5 0 0 1 1.5 14v-2.5" fill="none" stroke="#222" stroke-width="1.7"/><circle cx="8.5" cy="8.5" r="3.3" fill="none" stroke="#222" stroke-width="1.7"/></svg>
    <span class="abs" style="left:34px;top:8px">Похожие</span></div>
   <div class="abs btn" style="left:127px;top:194px;width:113px;height:32px">
    <svg class="abs" style="left:11px;top:8px" width="17" height="16" viewBox="0 0 17 16"><path d="M1.5 14.5C2.5 9 6 6.5 10 6.5V3l5.5 5-5.5 5V9.8C6.5 9.8 3.8 11 1.5 14.5z" fill="none" stroke="#222" stroke-width="1.6" stroke-linejoin="round"/></svg>
    <span class="abs" style="left:34px;top:8px">Отправить</span></div>
  </div>
  <div id="card2" class="abs card" style="left:971px;top:252px;width:248px;height:460px">
   <div class="abs" style="left:18px;top:13px;font-size:6.5px;letter-spacing:1.3px;color:#666">РЕКЛАМА</div>
   <svg class="abs" style="left:223px;top:15px" width="4" height="13"><circle cx="2" cy="1.5" r="1.2" fill="#333"/><circle cx="2" cy="6.5" r="1.2" fill="#333"/><circle cx="2" cy="11.5" r="1.2" fill="#333"/></svg>
   <div class="abs" style="left:12px;top:136px;width:225px;height:9px;background:linear-gradient(to right,#5aa0d2,#3d8cc9 50%,#62a6d4)"></div>
  </div>
 </div>
</div>
<div class="abs" style="left:0;top:70px;width:1366px;height:1px;background:#fff"></div>
<div class="abs" style="left:0;top:71px;width:1366px;height:1px;background:#3f3f3f"></div>
<div id="strip" class="abs"></div>
<div id="taskbar" class="abs"></div>
<div class="tb" style="left:2px;width:51px"></div>
<svg class="abs" style="left:4px;top:738px" width="17" height="16" viewBox="0 0 17 16"><path d="M1 3q3-2 7 0l-1 5q-4-2-7 0z" fill="#f25022"/><path d="M9 3q4 2 7 0l-1 5q-3 2-7 0z" fill="#7fba00"/><path d="M0 9q3-2 7 0l-1 5q-4-2-7 0z" fill="#00a4ef"/><path d="M8 9q4 2 7 0l-1 5q-3 2-7 0z" fill="#ffb900"/></svg>
<div class="abs" style="left:22px;top:739px;font-size:12px;font-weight:bold;color:#000;letter-spacing:-0.2px">Пуск</div>
<div class="tb pressed" style="left:63px;width:47px"></div>
<svg class="abs" style="left:71px;top:730px" width="33" height="33" viewBox="0 0 48 48"><circle cx="24" cy="24" r="22" fill="#db4437"/><path d="M24 24L5 35A22 22 0 0 0 24 46z" fill="#0f9d58"/><path d="M24 24L5 35A22 22 0 0 1 2 24 22 22 0 0 1 5.5 12z" fill="#0f9d58"/><path d="M24 24h22a22 22 0 0 1-22 22z" fill="#ffcd40"/><path d="M24 24L24 46A22 22 0 0 0 43 35z" fill="#ffcd40"/><path d="M24 13h20A22 22 0 0 1 46 24 22 22 0 0 1 35 43L24 24z" fill="#ffcd40"/><path d="M24 2A22 22 0 0 1 44 13H24z" fill="#db4437"/><circle cx="24" cy="24" r="10" fill="#fff"/><circle cx="24" cy="24" r="8" fill="#4285f4"/></svg>
<div class="abs" style="left:121px;top:731px;width:32px;height:32px;border-radius:50%;background:#f33"></div>
<svg class="abs" style="left:121px;top:731px" width="32" height="32" viewBox="0 0 32 32"><path d="M18.5 25V7.5h-2.6c-3.6 0-5.6 1.9-5.6 4.8 0 2.5 1.2 3.9 3.6 5.4L10 25M18.5 17.2h-3" fill="none" stroke="#fff" stroke-width="2.6"/></svg>
<svg class="abs" style="left:171px;top:734px" width="32" height="26" viewBox="0 0 32 26"><path d="M14 2l14-1 2 9-14 2z" fill="#fff" stroke="#aaa"/><path d="M2 12q0-4 4-4h20q4 0 4 4v8H2z" fill="#cfd4d8" stroke="#888"/><rect x="9" y="11" width="10" height="5" fill="#5aa0e0"/><rect x="4" y="18" width="26" height="6" fill="#9aa0a8"/><rect x="6" y="20" width="16" height="3" fill="#fff"/></svg>
<div class="tb" style="left:213px;width:48px"></div>
<svg class="abs" style="left:221px;top:734px" width="32" height="29" viewBox="0 0 32 29"><path d="M1 5h10l2-3h8l1 2h9v22H1z" fill="#f0d98a" stroke="#c9a858"/><rect x="5" y="3" width="4" height="2" fill="#1c1"/><rect x="13" y="5" width="4" height="2" fill="#d22"/><rect x="22" y="7" width="4" height="2" fill="#28e"/><path d="M1 9h30v17H1z" fill="#f5e29a" stroke="#c9a858"/><path d="M5 28V19h22v9h-6v-5H11v5z" fill="#7cc4e8" stroke="#3a90c8"/></svg>
<div class="tb" style="left:263px;width:48px"></div>
<svg class="abs" style="left:272px;top:732px" width="32" height="30" viewBox="0 0 32 30"><path d="M2 2l24 3v17L2 20z" fill="#1a4ab8" stroke="#889"/><path d="M14 6l7 11H7z" fill="#f8d020" stroke="#333" stroke-width=".6"/><path d="M14 10v4" stroke="#000" stroke-width="1.5"/><path d="M9 28h10l-2-5h-6z" fill="#bbb"/><path d="M13 20l5 6 12-16" fill="none" stroke="#3ab830" stroke-width="4"/></svg>
<div class="tb" style="left:313px;width:45px"></div>
<div class="abs" style="left:359px;top:728px;width:2px;height:38px;background:#555"></div>
<svg class="abs" style="left:319px;top:732px" width="31" height="31" viewBox="0 0 31 31"><rect x="11" y="4" width="19" height="23" fill="#fff" stroke="#2b579a" stroke-width="1.5"/><path d="M14 9h13M14 13h13M14 17h13M14 21h13" stroke="#2b579a" stroke-width="1.3"/><path d="M1 4l16-3v29L1 27z" fill="#2b579a"/><text x="3.5" y="20" font-family="Liberation Sans" font-weight="bold" font-size="10" fill="#fff">W</text></svg>
<div class="abs" style="left:1172px;top:740px;font-size:11px;color:#000">RU</div>
<div class="abs" style="left:1193px;top:734px;width:1px;height:26px;background:#bbb"></div>
<div class="abs" style="left:1197px;top:729px;width:169px;height:38px;border-top:1px solid #a0a0a0;border-left:1px solid #a0a0a0"></div>
<svg class="abs" style="left:1201px;top:740px" width="9" height="11" viewBox="0 0 9 11"><path d="M1.5 5L4.5 2l3 3M1.5 9.5l3-3 3 3" fill="none" stroke="#000" stroke-width="1.6"/></svg>
<svg class="abs" style="left:1218px;top:737px" width="17" height="18" viewBox="0 0 17 18"><path d="M2 4h7v13H2z" fill="#fff" stroke="#555"/><path d="M4 2h7v13" fill="none" stroke="#555"/><path d="M9 6h5v5a2.5 2.5 0 0 1-5 0z" fill="#fff" stroke="#555"/><path d="M10.5 3.5v2.5M12.5 3.5v2.5M11.5 13.5v3" stroke="#555"/></svg>
<svg class="abs" style="left:1243px;top:737px" width="18" height="18" viewBox="0 0 18 18"><path d="M2 1v16" stroke="#777" stroke-width="1.4"/><path d="M3 2q4-2 7 0t6 0v7q-3 2-6 0t-7 0z" fill="#f4f4f4" stroke="#888"/><circle cx="12.5" cy="13" r="4.5" fill="#e02020" stroke="#fff"/><path d="M10.5 11l4 4M14.5 11l-4 4" stroke="#fff" stroke-width="1.3"/></svg>
<div class="abs" style="left:1270px;top:732px;width:72px;text-align:center;font-size:13px;line-height:15.5px;color:#0a0a1a">23:31<br>12.12.2024</div>
<svg class="abs" style="left:1346px;top:740px" width="16" height="13" viewBox="0 0 16 13"><rect x=".5" y=".5" width="15" height="12" fill="#2a6cc8" stroke="#9ab"/><path d="M1 10h14v2H1z" fill="#123"/><rect x="2" y="8" width="2" height="2" fill="#fc0"/></svg>
</body></html>
